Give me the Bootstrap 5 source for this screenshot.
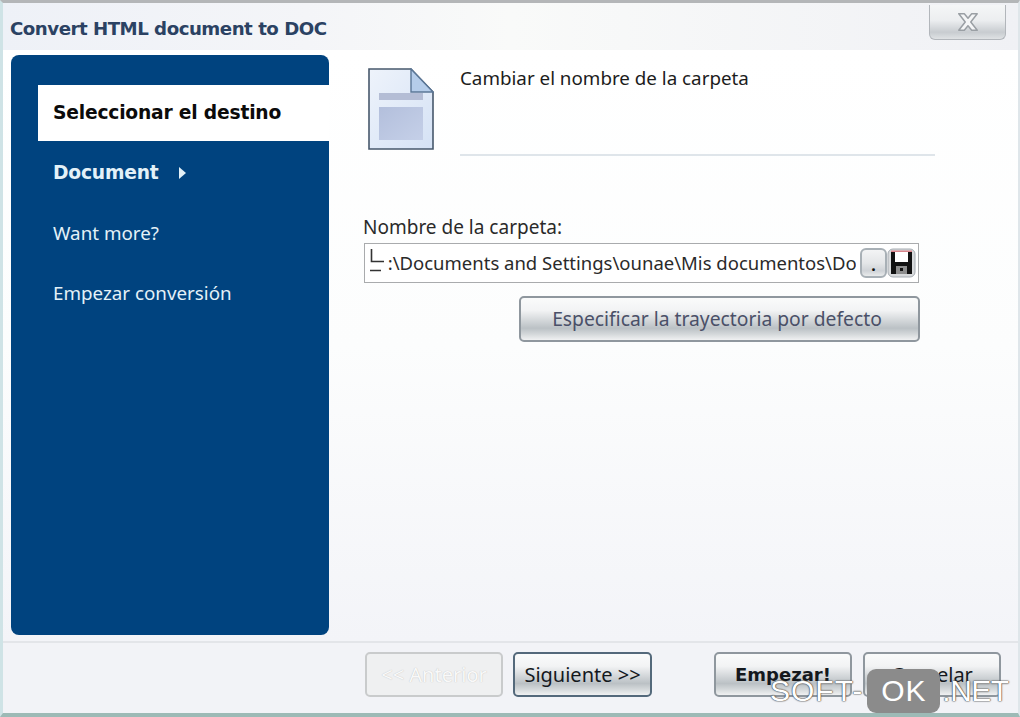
<!DOCTYPE html>
<html lang="en">
<head>
    <meta charset="UTF-8">
    <meta name="viewport" content="width=device-width, initial-scale=1.0">
    <title>Convert HTML document to DOC</title>
    <link href="https://cdn.jsdelivr.net/npm/bootstrap@5.3.0/dist/css/bootstrap.min.css" rel="stylesheet">
    <style>
        html, body {
            height: 100%;
            overflow: hidden;
        }
        body {
            background-color: #fff;
            font-family: "Noto Sans", "DejaVu Sans", sans-serif;
        }
        .wiz-window {
            position: relative;
            width: 1020px;
            height: 717px;
            overflow: hidden;
            background-color: #f2f3f7;
            border-top: 3px solid #b4b6b8;
            border-left: 3px solid #cfe3e6;
            border-bottom: 4px solid #9dbab6;
            border-right: 2px solid #dfe6ea;
        }
        .wiz-title {
            height: 47px;
            padding-left: 7px;
            background: linear-gradient(90deg, #eef1f7 0%, #f4f5f8 30%, #f9faf9 50%, #f0f1f5 100%);
        }
        .wiz-title h1 {
            font-family: "DejaVu Sans", sans-serif;
            font-size: 18.2px;
            font-weight: 700;
            color: #2b4263;
            margin: 15px 0 0 0;
            letter-spacing: -.5px;
        }
        .wiz-close {
            width: 77px;
            height: 35px;
            margin: 2px 12px 0 0;
            padding: 0;
            border: 1px solid #b2b6bb;
            border-top: 0;
            border-radius: 0 0 6px 6px;
            background: linear-gradient(#f5f6f7 0%, #eceef0 45%, #c8ccd0 80%, #dfe2e4 100%);
        }
        .wiz-body {
            height: 591px;
            background-color: #fff;
            background-image: linear-gradient(#fff 0%, #fcfdfd 50%, #f3f4f8 100%);
        }
        .wiz-side {
            width: 318px;
            margin: 5px 0 6px 8px;
            padding-top: 30px;
            background-color: #00437f;
            border-radius: 8px;
            flex-shrink: 0;
        }
        .wiz-step {
            height: 56px;
            margin-left: 27px;
            margin-bottom: 4px;
            padding-left: 15px;
            font-size: 18.8px;
            color: #e3f1f8;
        }
        .wiz-step-on {
            background-color: #fff;
            color: #0b0b0b;
        }
        .wiz-step-on, .wiz-step-bold {
            font-family: "DejaVu Sans", sans-serif;
            font-size: 18.7px;
            font-weight: 700;
            letter-spacing: -.2px;
        }
        .wiz-arrow {
            width: 0;
            height: 0;
            margin-left: 20px;
            border-left: 7px solid #e3f1f8;
            border-top: 6px solid transparent;
            border-bottom: 6px solid transparent;
        }
        .wiz-main {
            padding: 18px 0 0 34px;
            flex-grow: 1;
        }
        .wiz-head {
            height: 146px;
            margin-left: 5px;
            gap: 26px;
        }
        .wiz-head-text {
            width: 475px;
            height: 88px;
            border-bottom: 2px solid #dfe5ea;
            font-size: 18.8px;
            color: #1c1c1c;
            line-height: 20px;
        }
        .wiz-label {
            margin: 0 0 3px 0;
            font-size: 19px;
            line-height: 26px;
            color: #2a2a2a;
        }
        .wiz-path {
            position: relative;
            width: 555px;
            height: 40px;
            margin-left: 1px;
            padding-right: 2px;
            border: 1px solid #a9abad;
            background-color: #fff;
        }
        .wiz-path input {
            padding: 0 0 0 11px;
            border: 0;
            border-radius: 0;
            font-size: 18.5px;
            color: #2a2a2a;
            min-width: 0;
            background: transparent;
        }
        .wiz-glitch {
            position: absolute;
            left: 2px;
            top: 2px;
            width: 21px;
            height: 34px;
        }
        .wiz-dots {
            width: 27px;
            height: 30px;
            padding: 0;
            line-height: 30px;
            flex-shrink: 0;
            border: 2px solid #a8b0b6;
            border-radius: 6px;
            background: linear-gradient(#f3f4f5 0%, #e4e6e8 50%, #cfd3d7 80%, #e9ebec 100%);
            color: #111;
            font-weight: 700;
        }
        .wiz-disk {
            width: 29px;
            height: 30px;
            padding: 0;
            flex-shrink: 0;
            border: 0;
            background: none;
        }
        .wiz-btn {
            --bs-btn-padding-x: 0;
            --bs-btn-padding-y: 0;
            border: 2px solid #8f979e;
            border-radius: 5px;
            background: linear-gradient(#fafbfb 0%, #f2f3f4 30%, #bbc1c5 72%, #d4d8da 86%, #f0f1f2 100%);
            font-size: 20px;
            color: #14181d;
        }
        .wiz-default {
            display: block;
            width: 401px;
            height: 46px;
            margin: 13px 0 0 156px;
            padding-right: 5px;
            font-size: 19.3px;
            color: #4a5068;
        }
        .wiz-foot {
            height: 72px;
            padding: 9px 16px 0 362px;
            background-color: #f2f3f7;
            border-top: 2px solid #e3e5e9;
        }
        .wiz-foot .wiz-btn {
            width: 138px;
            height: 45px;
        }
        .wiz-back {
            border-color: #c9cbcc !important;
            background: #eff0f1 !important;
            color: #f9f9f9 !important;
            opacity: 1 !important;
            text-shadow: 0 0 1px #b5b5b5;
        }
        .wiz-foot .wiz-next {
            border-color: #54697b;
            margin-left: 10px;
            width: 139px;
        }
        .wiz-start {
            margin-left: 62px;
            font-family: "DejaVu Sans", sans-serif;
            font-size: 18px;
            font-weight: 700;
        }
        .wiz-cancel {
            margin-left: 11px;
        }
        .wiz-mark {
            position: absolute;
            left: 767px;
            top: 666px;
            height: 44px;
            white-space: nowrap;
            font-family: "Liberation Sans", sans-serif;
            font-size: 30px;
            line-height: 44px;
            letter-spacing: 1px;
            color: #fff;
            text-shadow: 0 0 1px #444, 0 0 1px #444, 0 0 2px #666;
        }
        .wiz-mark-box {
            display: inline-block;
            width: 73px;
            margin: 0 2px 0 4px;
            text-align: center;
            background-color: #8b8b8b;
            border-radius: 9px;
            text-shadow: none;
        }
        .wiz-mark-end {
            letter-spacing: -.5px;
        }
    </style>
</head>
<body>
    <div class="wiz-window">
        <!-- Title bar -->
        <div class="wiz-title d-flex justify-content-between align-items-start">
            <h1>Convert HTML document to DOC</h1>
            <button class="wiz-close d-flex align-items-center justify-content-center" type="button" aria-label="Close">
                <svg width="24" height="24" viewBox="0 0 26 24">
                    <path d="M3 3h6l4 5 4-5h6l-7 9 7 9h-6l-4-5-4 5H3l7-9z" fill="#f4f5f6" stroke="#9a9fa4" stroke-width="1.6" stroke-linejoin="round"/>
                </svg>
            </button>
        </div>

        <div class="wiz-body d-flex">
            <!-- Steps -->
            <div class="wiz-side">
                <div class="wiz-step wiz-step-on d-flex align-items-center">Seleccionar el destino</div>
                <div class="wiz-step wiz-step-bold d-flex align-items-center">Document<span class="wiz-arrow"></span></div>
                <div class="wiz-step d-flex align-items-center">Want more?</div>
                <div class="wiz-step d-flex align-items-center">Empezar conversión</div>
            </div>

            <!-- Page -->
            <div class="wiz-main">
                <div class="wiz-head d-flex">
                    <svg width="66" height="82" viewBox="0 0 66 82" class="flex-shrink-0">
                        <defs>
                            <linearGradient id="pageFill" x1="0" y1="0" x2="1" y2="1">
                                <stop offset="0" stop-color="#eef3fb"/>
                                <stop offset="1" stop-color="#d5e2f5"/>
                            </linearGradient>
                            <linearGradient id="panelFill" x1="0" y1="0" x2="1" y2="1">
                                <stop offset="0" stop-color="#b3bfdc"/>
                                <stop offset="1" stop-color="#c5d0e8"/>
                            </linearGradient>
                        </defs>
                        <path d="M1 1H43L65 24V81H1z" fill="url(#pageFill)" stroke="#47586c" stroke-width="1.6"/>
                        <path d="M43 1V24H65z" fill="#b5cdea" stroke="#5b7797" stroke-width="1.4"/>
                        <rect x="11" y="25" width="44" height="7" fill="#b4bdd5"/>
                        <rect x="11" y="39" width="44" height="33" fill="url(#panelFill)"/>
                    </svg>
                    <div class="wiz-head-text">Cambiar el nombre de la carpeta</div>
                </div>

                <p class="wiz-label">Nombre de la carpeta:</p>
                <div class="wiz-path d-flex align-items-center">
                    <input class="form-control shadow-none" type="text" readonly value="C:\Documents and Settings\ounae\Mis documentos\Do">
                    <svg class="wiz-glitch" viewBox="0 0 21 34" aria-hidden="true">
                        <rect width="21" height="34" fill="#fff"/>
                        <path d="M4.500 3V15.500H17M3 24.500H14" fill="none" stroke="#333" stroke-width="1.600"/>
                    </svg>
                    <button class="wiz-dots ms-1" type="button">.</button>
                    <button class="wiz-disk" type="button" aria-label="Save">
                        <svg width="29" height="30" viewBox="0 0 29 30">
                            <rect x="1" y="1" width="27" height="28" rx="5" fill="#d8dadc" stroke="#a6acb2"/>
                            <path d="M4 4H25V26H4z" fill="#111"/>
                            <rect x="8" y="4" width="13" height="10" fill="#fff"/>
                            <rect x="4" y="2.500" width="21" height="1.500" fill="#d9838a"/>
                            <rect x="9" y="18" width="11" height="8" fill="#8e8e8e"/>
                            <rect x="13" y="20" width="3" height="3" fill="#111"/>
                        </svg>
                    </button>
                </div>
                <button class="btn wiz-btn wiz-default" type="button">Especificar la trayectoria por defecto</button>
            </div>
        </div>

        <!-- Buttons -->
        <div class="wiz-foot d-flex align-items-start">
            <button class="btn wiz-btn wiz-back" type="button" disabled>&lt;&lt; Anterior</button>
            <button class="btn wiz-btn wiz-next" type="button">Siguiente &gt;&gt;</button>
            <button class="btn wiz-btn wiz-start" type="button">Empezar!</button>
            <button class="btn wiz-btn wiz-cancel" type="button">Cancelar</button>
        </div>

        <div class="wiz-mark">SOFT-<span class="wiz-mark-box">OK</span><span class="wiz-mark-end">.NET</span></div>
    </div>

    <script src="https://cdn.jsdelivr.net/npm/bootstrap@5.3.0/dist/js/bootstrap.bundle.min.js"></script>
</body>
</html>
